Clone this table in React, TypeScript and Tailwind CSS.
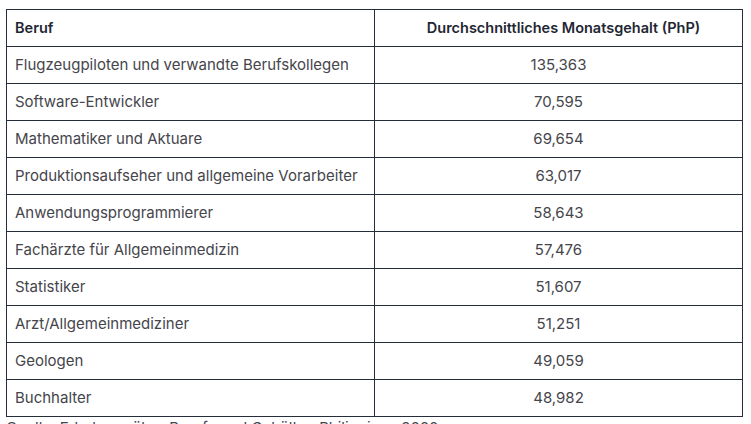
const rows: [string, string][] = [
  ['Flugzeugpiloten und verwandte Berufskollegen', '135,363'],
  ['Software-Entwickler', '70,595'],
  ['Mathematiker und Aktuare', '69,654'],
  ['Produktionsaufseher und allgemeine Vorarbeiter', '63,017'],
  ['Anwendungsprogrammierer', '58,643'],
  ['Fachärzte für Allgemeinmedizin', '57,476'],
  ['Statistiker', '51,607'],
  ['Arzt/Allgemeinmediziner', '51,251'],
  ['Geologen', '49,059'],
  ['Buchhalter', '48,982'],
]

export default function App() {
  return (
    <div className="min-h-screen bg-white pl-[6px] pt-[9px] font-['Inter',sans-serif]">
      <table className="w-[737px] border-collapse border border-[#252d3a] text-[15px]">
        <thead>
          <tr className="h-[37px]">
            <th className="w-[368px] border border-[#252d3a] px-[8px] text-left text-[14.5px] font-semibold text-[#1f2733]">
              Beruf
            </th>
            <th className="border border-[#252d3a] pl-[18px] pr-[8px] text-center text-[14.5px] font-semibold text-[#1f2733]">
              Durchschnittliches Monatsgehalt (PhP)
            </th>
          </tr>
        </thead>
        <tbody>
          {rows.map(([job, pay]) => (
            <tr key={job} className="h-[37px]">
              <td className="border border-[#252d3a] px-[8px] text-[#45454b]">{job}</td>
              <td className="border border-[#252d3a] px-[8px] text-center text-[#45454b]">{pay}</td>
            </tr>
          ))}
        </tbody>
      </table>
      <p className="text-[15px] text-[#45454b]">
        Quelle: Erhebung über Berufe und Gehälter, Philippinen 2020
      </p>
    </div>
  )
}
